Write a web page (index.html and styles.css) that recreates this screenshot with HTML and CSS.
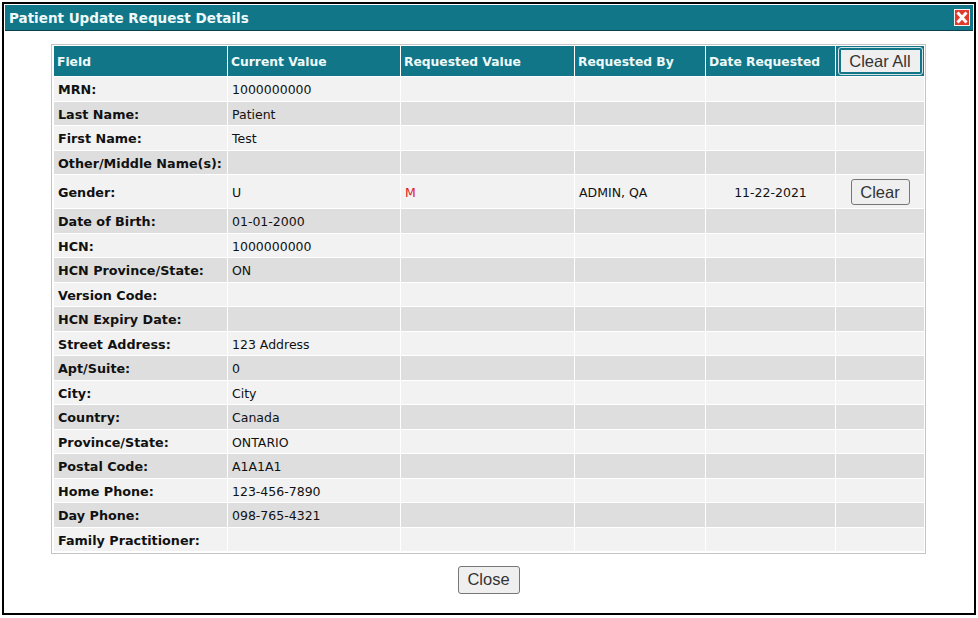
FILE: index.html
```html
<!DOCTYPE html>
<html lang="en">
<head>
<meta charset="utf-8">
<title>Patient Update Request Details</title>
<link rel="stylesheet" href="styles.css">
</head>
<body>
<div class="dialog">
  <div class="titlebar">
    <span class="title">Patient Update Request Details</span>
    <span class="close-x">
      <svg width="16" height="17" viewBox="0 0 16 17"><rect x="0.5" y="0.5" width="15" height="16" fill="#e03a2c" stroke="#f4f4f4"/><path d="M3.5 3.5L12.5 13.5M12.5 3.5L3.5 13.5" stroke="#fff" stroke-width="3"/></svg>
    </span>
  </div>
  <div class="content">
    <div class="table-wrap">
      <table class="details">
        <colgroup>
          <col class="c1"><col class="c2"><col class="c3"><col class="c4"><col class="c5"><col class="c6">
        </colgroup>
        <thead>
          <tr><th>Field</th><th>Current Value</th><th>Requested Value</th><th>Requested By</th><th>Date Requested</th><th class="action"><button class="btn btn-all">Clear All</button></th></tr>
        </thead>
        <tbody>
          <tr><td class="f">MRN:</td><td>1000000000</td><td></td><td></td><td></td><td></td></tr>
          <tr><td class="f">Last Name:</td><td>Patient</td><td></td><td></td><td></td><td></td></tr>
          <tr><td class="f">First Name:</td><td>Test</td><td></td><td></td><td></td><td></td></tr>
          <tr><td class="f">Other/Middle Name(s):</td><td></td><td></td><td></td><td></td><td></td></tr>
          <tr class="tall"><td class="f">Gender:</td><td>U</td><td class="req">M</td><td>ADMIN, QA</td><td class="date">11-22-2021</td><td class="action"><button class="btn btn-clear">Clear</button></td></tr>
          <tr><td class="f">Date of Birth:</td><td>01-01-2000</td><td></td><td></td><td></td><td></td></tr>
          <tr><td class="f">HCN:</td><td>1000000000</td><td></td><td></td><td></td><td></td></tr>
          <tr><td class="f">HCN Province/State:</td><td>ON</td><td></td><td></td><td></td><td></td></tr>
          <tr><td class="f">Version Code:</td><td></td><td></td><td></td><td></td><td></td></tr>
          <tr><td class="f">HCN Expiry Date:</td><td></td><td></td><td></td><td></td><td></td></tr>
          <tr><td class="f">Street Address:</td><td>123 Address</td><td></td><td></td><td></td><td></td></tr>
          <tr><td class="f">Apt/Suite:</td><td>0</td><td></td><td></td><td></td><td></td></tr>
          <tr><td class="f">City:</td><td>City</td><td></td><td></td><td></td><td></td></tr>
          <tr><td class="f">Country:</td><td>Canada</td><td></td><td></td><td></td><td></td></tr>
          <tr><td class="f">Province/State:</td><td>ONTARIO</td><td></td><td></td><td></td><td></td></tr>
          <tr><td class="f">Postal Code:</td><td>A1A1A1</td><td></td><td></td><td></td><td></td></tr>
          <tr><td class="f">Home Phone:</td><td>123-456-7890</td><td></td><td></td><td></td><td></td></tr>
          <tr><td class="f">Day Phone:</td><td>098-765-4321</td><td></td><td></td><td></td><td></td></tr>
          <tr><td class="f">Family Practitioner:</td><td></td><td></td><td></td><td></td><td></td></tr>
        </tbody>
      </table>
    </div>
    <div class="footer"><button class="btn btn-close">Close</button></div>
  </div>
</div>
</body>
</html>
```
FILE: styles.css
```css
* { box-sizing: border-box; }
html, body { margin: 0; height: 100%; background: #fff; overflow: hidden; }
body { padding: 2px; font-family: "DejaVu Sans", Verdana, sans-serif; font-size: 12.5px; color: #111; }
.dialog { width: 974px; height: 613px; border: 2px solid #000; padding: 1px; background: #fff; display: flex; flex-direction: column; }
.titlebar { height: 26px; flex: none; background: #127689; border-bottom: 1px solid #0c3f4a; display: flex; align-items: center; justify-content: space-between; padding: 0 3px 0 4px; }
.title { color: #eefafa; font-weight: bold; font-size: 13.5px; }
.close-x { display: flex; }
.content { flex: 1; padding: 13px 47px 0 46px; }
.table-wrap { width: 875px; border: 1px solid #c4c4c4; padding: 1px 0 1px 2px; }
.details { width: 870px; table-layout: fixed; border-collapse: separate; border-spacing: 0; }
.c1 { width: 174px; } .c2 { width: 173px; } .c3 { width: 174px; } .c4 { width: 131px; } .c5 { width: 130px; } .c6 { width: 88px; }
th { height: 31px; background: #127689; color: #eefafa; font-size: 12.3px; font-weight: bold; text-align: left; padding: 2px 3px 0; border-right: 1px solid #fff; border-bottom: 1px solid #fff; white-space: nowrap; }
td { height: 24.5px; padding: 2px 4px 0 4px; border-right: 1px solid #fff; border-bottom: 1px solid #fff; white-space: nowrap; font-size: 12.5px; }
th:last-child, td:last-child { border-right: 0; }
tbody tr:nth-child(odd) td { background: #f2f2f2; }
tbody tr:nth-child(even) td { background: #dedede; }
tbody tr.tall td { height: 34px; background: #f2f2f2; }
td.f { font-weight: bold; font-size: 12.75px; padding-left: 4px; color: #111; }
td.req { color: #e0201c; }
td.date { text-align: center; }
td.action, th.action { text-align: center; padding: 0; }
.btn { font-family: "Liberation Sans", Arial, sans-serif; font-size: 16.5px; color: #333; background: #efefef; border: 1px solid #767676; border-radius: 3px; padding: 0; height: 26px; width: 59px; }
.btn-all { width: 83px; height: 26px; border: 2px solid #127689; outline: 1px solid #d8e4e8; border-radius: 2px; }
.btn-clear { padding-top: 1px; }
.footer { display: flex; justify-content: center; margin-top: 12px; }
.btn-close { width: 62px; height: 28px; padding-bottom: 2px; }
```
